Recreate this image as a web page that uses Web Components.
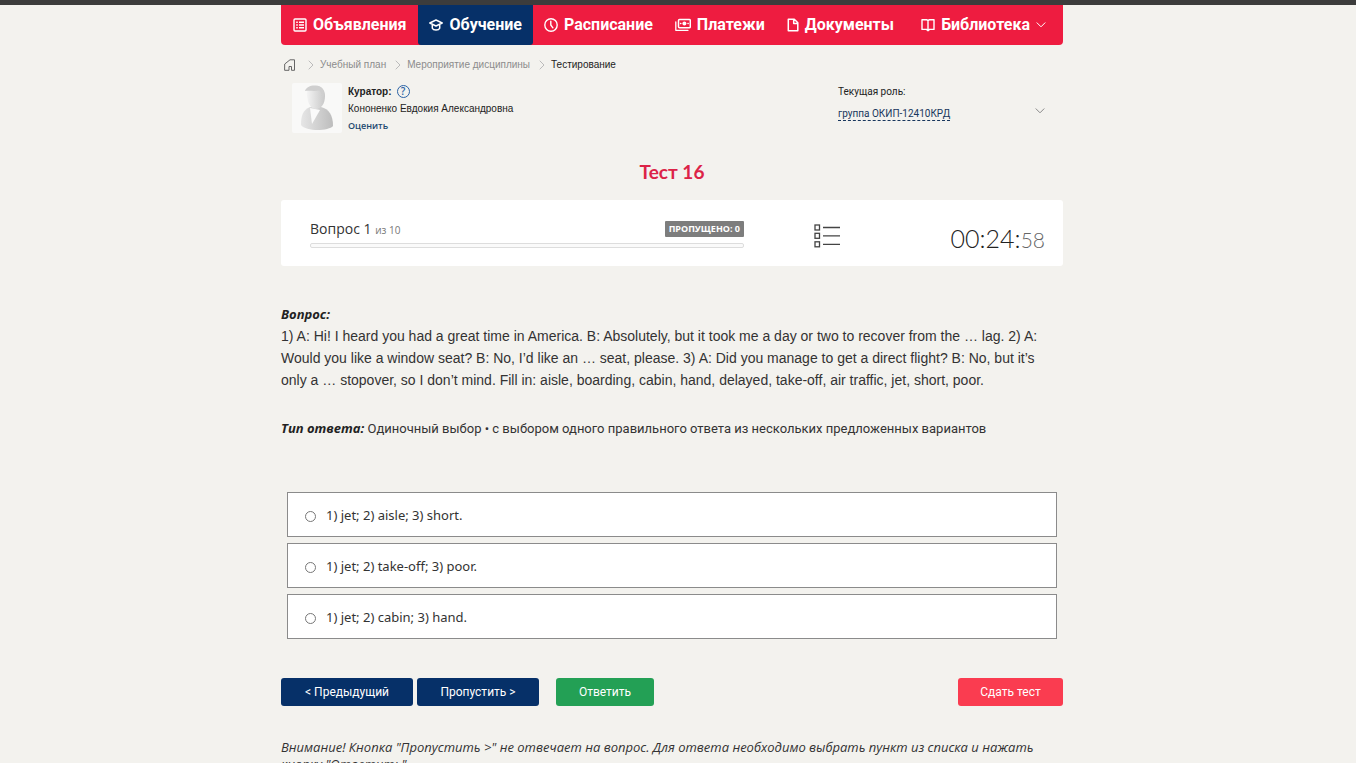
<!DOCTYPE html>
<html lang="ru">
<head>
<meta charset="utf-8">
<meta name="viewport" content="width=device-width, initial-scale=1">
<title>Тест 16</title>
<style>
  html { background: #f3f2ee; }
  body {
    margin: 0;
    color: #333;
    font-family: "Open Sans", "Noto Sans", sans-serif;
    font-size: 13px;
  }
</style>
</head>
<body>
<quiz-app></quiz-app>

<script>
const define = (name, html, setup) => {
  const template = document.createElement('template');
  template.innerHTML = html;
  customElements.define(name, class extends HTMLElement {
    connectedCallback() {
      if (this.shadowRoot) return;
      const root = this.attachShadow({ mode: 'open' });
      root.append(template.content.cloneNode(true));
      if (setup) setup(this, root);
    }
  });
};

const svg = (w, h, body) =>
  `<svg width="${w}" height="${h}" viewBox="0 0 ${w} ${h}" fill="none" stroke="currentColor" stroke-linecap="round" stroke-linejoin="round" aria-hidden="true">${body}</svg>`;

const icons = {
  news: svg(14, 14, '<rect x="1" y="1" width="12" height="12" rx="1" stroke-width="1.4"/><path stroke-width="1.5" stroke-linecap="butt" d="M3.2 4.3h1.6M3.2 7h1.6M3.2 9.7h1.6M6 4.3h5M6 7h5M6 9.7h5"/>'),
  study: svg(14, 14, '<path stroke-width="1.5" d="M.8 5 7 2l6.2 3L7 8zM3.300 6.500v3.700c1 2.400 6.400 2.400 7.400 0V6.500"/>'),
  clock: svg(14, 14, '<circle cx="7" cy="7" r="6.2" stroke-width="1.4"/><path stroke-width="1.4" d="M6.8 3.3V7l2.1 2.8"/>'),
  money: svg(16, 14, '<rect x="3.5" y="1.5" width="11.8" height="8.2" rx="1" stroke-width="1.5"/><circle cx="9.4" cy="5.6" r="2" fill="currentColor" stroke="none"/><path stroke-width="1.3" d="M5.5 5.5h.4M12.900 5.5h.4M.8 4v8.3H13"/>'),
  doc: svg(12, 14, '<path stroke-width="1.5" d="M1.3 1.3h6l3.5 3.5v7.9H1.3zM6.7 1.5v4h4"/>'),
  book: svg(14, 14, '<path stroke-width="1.4" d="M7 2.2v10.600M1 1.700h4.500L7 2.700l1.500-1H13v9.700H8.500L7 12.700l-1.500-1.300H1z"/>'),
  down: svg(10, 6, '<path stroke-width="1" d="M1 .8 5 4.800 9 .8"/>'),
  right: svg(6, 10, '<path stroke-width="1" d="M1 1 5 5 1 9"/>'),
  home: svg(12, 12, '<path stroke-width="1" d="M1 4.800 6 .8h4.500v10.500H7.500V7.500H5v3.800H1z"/>'),
  list: svg(26, 24, '<g stroke-linecap="butt" stroke-linejoin="miter" stroke-width="1.300"><rect x="1" y="1" width="4.500" height="5"/><rect x="1" y="9.300" width="4.500" height="5"/><rect x="1" y="17.800" width="4.500" height="5"/><path d="M9 3.500h17M9 11.800h17M9 20.300h17"/></g>')
};

customElements.define('ui-icon', class extends HTMLElement {
  static observedAttributes = ['name'];
  connectedCallback() { this.draw(); }
  attributeChangedCallback() { this.draw(); }
  draw() {
    const root = this.shadowRoot || this.attachShadow({ mode: 'open' });
    root.innerHTML = `<style>:host{display:inline-flex;flex:none}svg{display:block}</style>${icons[this.getAttribute('name')] || ''}`;
  }
});

define('nav-item', `
  <style>
    :host { display: flex; }
    a {
      display: flex; align-items: center; gap: 6px;
      height: 40px; padding: 0 11px;
      color: #fff; text-decoration: none; white-space: nowrap;
      font: 700 16px/40px Roboto, sans-serif;
    }
    :host(:first-child) a { padding: 0 12px; }
    :host([active]) a { background: #063068; border-radius: 0 0 3px 3px; }
    :host([menu]) a { padding-right: 17px; }
  </style>
  <a href="#"><ui-icon></ui-icon><span><slot></slot></span></a>`,
  (host, root) => {
    root.querySelector('ui-icon').setAttribute('name', host.getAttribute('icon'));
    if (host.hasAttribute('menu')) {
      const arrow = document.createElement('ui-icon');
      arrow.setAttribute('name', 'down');
      root.querySelector('a').append(arrow);
    }
  });

define('main-nav', `
  <style>
    :host { display: block; background: #ee1c40; border-radius: 0 0 4px 4px; }
    nav { display: flex; }
    [menu] { margin-left: auto; }
  </style>
  <nav>
    <nav-item icon="news">Объявления</nav-item>
    <nav-item icon="study" active>Обучение</nav-item>
    <nav-item icon="clock">Расписание</nav-item>
    <nav-item icon="money">Платежи</nav-item>
    <nav-item icon="doc">Документы</nav-item>
    <nav-item icon="book" menu>Библиотека</nav-item>
  </nav>`);

define('bread-crumbs', `
  <style>
    :host { display: block; padding: 12px 3px 0; }
    nav { display: flex; align-items: center; height: 16px; font: 10px/16px "Liberation Sans", sans-serif; color: #222; }
    a { color: #8c8c8c; text-decoration: none; display: flex; }
    ui-icon { color: #bbb; margin: 0 6px 0 9px; }
    ui-icon[name=home] { color: #666; margin: 0 3px 0 0; }
  </style>
  <nav>
    <a href="#" aria-label="Главная"><ui-icon name="home"></ui-icon></a><ui-icon name="right"></ui-icon>
    <a href="#">Учебный план</a><ui-icon name="right"></ui-icon>
    <a href="#">Мероприятие дисциплины</a><ui-icon name="right"></ui-icon>
    <span>Тестирование</span>
  </nav>`);

define('curator-card', `
  <style>
    :host { display: flex; gap: 6px; font: 10px/17px "Liberation Sans", sans-serif; color: #222; }
    .photo { display: block; flex: none; }
    p { margin: 0; }
    .head { display: flex; align-items: center; gap: 5px; font-weight: 700; }
    button {
      width: 13px; height: 13px; padding: 0; border: 1px solid #2a62a5; border-radius: 50%;
      background: none; color: #2a62a5; font: 600 10px/11px "Open Sans", sans-serif;
    }
    a { color: #1f4a70; font: 600 9px/17px "Open Sans", sans-serif; text-decoration: none; }
  </style>
  <svg class="photo" width="50" height="50" viewBox="0 0 50 50" role="img" aria-label="Фото куратора">
    <defs>
      <linearGradient id="g" x1="0" x2="1"><stop offset="0" stop-color="#e6e6e6"/><stop offset="1" stop-color="#bdbdbd"/></linearGradient>
      <linearGradient id="f" x1="0" x2="1"><stop offset="0" stop-color="#f4f4f4"/><stop offset="1" stop-color="#c8c8c8"/></linearGradient>
    </defs>
    <rect width="50" height="50" rx="2" fill="#f9f9f8"/>
    <path d="M9 42c0-10 2-15 9-18l11 0c8 2 12 8 12 19-4 5-27 6-32-1z" fill="url(#g)"/>
    <path d="M18 25l2 16 8-14z" fill="#fafafa"/>
    <path d="M15 13c-1-7 3-10 9-10s9 4 9 10c0 8-4 13-9 13s-8-5-9-13z" fill="url(#f)"/>
    <path d="M13 8c1-4 6-6 11-5.500 5 0 9 4 7.500 12-2-1-1.500-5-4-7-5 1-9 0-14.500 .5z" fill="#cfcfcf"/>
  </svg>
  <div>
    <p class="head"><span>Куратор:</span><button type="button" aria-label="Справка">?</button></p>
    <p>Кононенко Евдокия Александровна</p>
    <p><a href="#">Оценить</a></p>
  </div>`);

define('role-picker', `
  <style>
    :host { display: grid; grid-template-columns: 1fr auto; align-content: start; font: 10px/17px Roboto, sans-serif; color: #222; }
    span { grid-column: 1 / -1; }
    div { padding-top: 5px; }
    a { display: inline-block; line-height: 12px; color: #17365c; text-decoration: none; border-bottom: 1px dashed #17365c; }
    button { border: 0; background: none; padding: 8px 0 0; color: #888; display: flex; }
  </style>
  <span>Текущая роль:</span>
  <div><a href="#">группа ОКИП-12410КРД</a></div>
  <button type="button" aria-label="Сменить роль"><ui-icon name="down"></ui-icon></button>`);

define('quiz-status', `
  <style>
    :host { display: flex; align-items: center; background: #fff; border-radius: 3px; height: 66px; padding: 0 18px 0 29px; }
    .progress { flex: 0 1 434px; }
    .row { display: flex; justify-content: space-between; align-items: center; height: 20px; }
    .num { font-size: 14px; color: #333; }
    small { font-size: 10px; color: #777; }
    .badge { background: #7d7d7d; color: #fff; font-size: 9px; font-weight: 700; line-height: 16px; padding: 0 4px; border-radius: 1px; }
    .bar { height: 3px; margin-top: 4px; border: 1px solid #ddd; border-radius: 2px; background: #fafafa; }
    button { margin-left: 70px; padding: 5px 0 0; border: 0; background: none; color: #444; display: flex; }
    time { margin-left: auto; padding-top: 11px; font: 300 25px/32px Lato, sans-serif; color: #222; }
    time span { font-size: 21px; color: #666; }
  </style>
  <div class="progress">
    <div class="row"><span class="num">Вопрос 1 <small>из 10</small></span><span class="badge">ПРОПУЩЕНО: 0</span></div>
    <div class="bar" role="progressbar" aria-label="Прогресс" aria-valuenow="0" aria-valuemax="10"></div>
  </div>
  <button type="button" aria-label="Список вопросов"><ui-icon name="list"></ui-icon></button>
  <time>00:24:<span>58</span></time>`);

define('quiz-question', `
  <style>
    :host { display: block; font: 13px/21px Roboto, sans-serif; color: #333; }
    p { margin: 0; }
    b { font-family: "Open Sans", sans-serif; font-style: italic; color: #222; }
    .text { font: 14px/22px "Liberation Sans", sans-serif; }
    .kind { margin-top: 27px; }
  </style>
  <p><b>Вопрос:</b></p>
  <p class="text">1) A: Hi! I heard you had a great time in America. B: Absolutely, but it took me a day or two to recover from the … lag. 2) A:<br>Would you like a window seat? B: No, I’d like an … seat, please. 3) A: Did you manage to get a direct flight? B: No, but it’s<br>only a … stopover, so I don’t mind. Fill in: aisle, boarding, cabin, hand, delayed, take-off, air traffic, jet, short, poor.</p>
  <p class="kind"><b>Тип ответа:</b> Одиночный выбор • с выбором одного правильного ответа из нескольких предложенных вариантов</p>`);

define('quiz-options', `
  <style>
    :host { display: block; }
    fieldset { display: grid; gap: 6px; margin: 0; padding: 0; border: 0; min-width: 0; }
    label {
      display: flex; align-items: center; gap: 9px; box-sizing: border-box;
      height: 45px; padding: 0 16px; background: #fff; border: 1px solid #8b8b8b;
      font: 13px/18px "Noto Sans", sans-serif; color: #333;
    }
    input {
      appearance: none; width: 11px; height: 11px; margin: 3px 1px 0;
      border: 1px solid #777; border-radius: 50%; background: #fff; box-sizing: border-box;
    }
    input:checked { border: 3px solid #063068; }
  </style>
  <fieldset aria-label="Варианты ответа">
    <label><input type="radio" name="answer"><span>1) jet; 2) aisle; 3) short.</span></label>
    <label><input type="radio" name="answer"><span>1) jet; 2) take-off; 3) poor.</span></label>
    <label><input type="radio" name="answer"><span>1) jet; 2) cabin; 3) hand.</span></label>
  </fieldset>`);

define('ui-button', `
  <style>
    :host { display: block; }
    button {
      width: 100%; height: 28px; padding: 0; border: 0; border-radius: 3px;
      background: var(--tone, #063068); color: #fff; white-space: nowrap;
      font: 400 12px/28px Roboto, sans-serif;
    }
    :host([tone=green]) { --tone: #23a055; }
    :host([tone=red]) { --tone: #fa3c50; }
  </style>
  <button type="button"><slot></slot></button>`);

define('quiz-actions', `
  <style>
    :host { display: flex; gap: 4px; }
    .prev { width: 132px; }
    .skip { width: 122px; }
    .send { width: 98px; margin-left: 13px; }
    .done { width: 105px; margin-left: auto; }
  </style>
  <ui-button class="prev">&lt; Предыдущий</ui-button>
  <ui-button class="skip">Пропустить &gt;</ui-button>
  <ui-button class="send" tone="green">Ответить</ui-button>
  <ui-button class="done" tone="red">Сдать тест</ui-button>`);

define('quiz-app', `
  <style>
    :host { display: block; border-top: 5px solid #3c3c3c; padding-right: 12px; }
    main { max-width: 782px; margin: 0 auto; }
    .people { display: grid; grid-template-columns: 546px 1fr; padding: 10px 18px 0 11px; }
    h1 { margin: 22px 0 0; text-align: center; color: #dc2347; font: 700 19px/32px Lato, sans-serif; }
    quiz-status { margin-top: 12px; }
    quiz-question { margin-top: 38px; }
    quiz-options { margin: 53px 6px 0; }
    quiz-actions { margin-top: 39px; }
    .note { margin: 33px 0 0; font: italic 13px/17px "Open Sans", sans-serif; color: #333; }
  </style>
  <main>
    <main-nav></main-nav>
    <bread-crumbs></bread-crumbs>
    <div class="people"><curator-card></curator-card><role-picker></role-picker></div>
    <h1>Тест 16</h1>
    <quiz-status></quiz-status>
    <quiz-question></quiz-question>
    <quiz-options></quiz-options>
    <quiz-actions></quiz-actions>
    <p class="note">Внимание! Кнопка "Пропустить &gt;" не отвечает на вопрос. Для ответа необходимо выбрать пункт из списка и нажать<br>кнопку "Ответить".</p>
  </main>`);
</script>
</body>
</html>
